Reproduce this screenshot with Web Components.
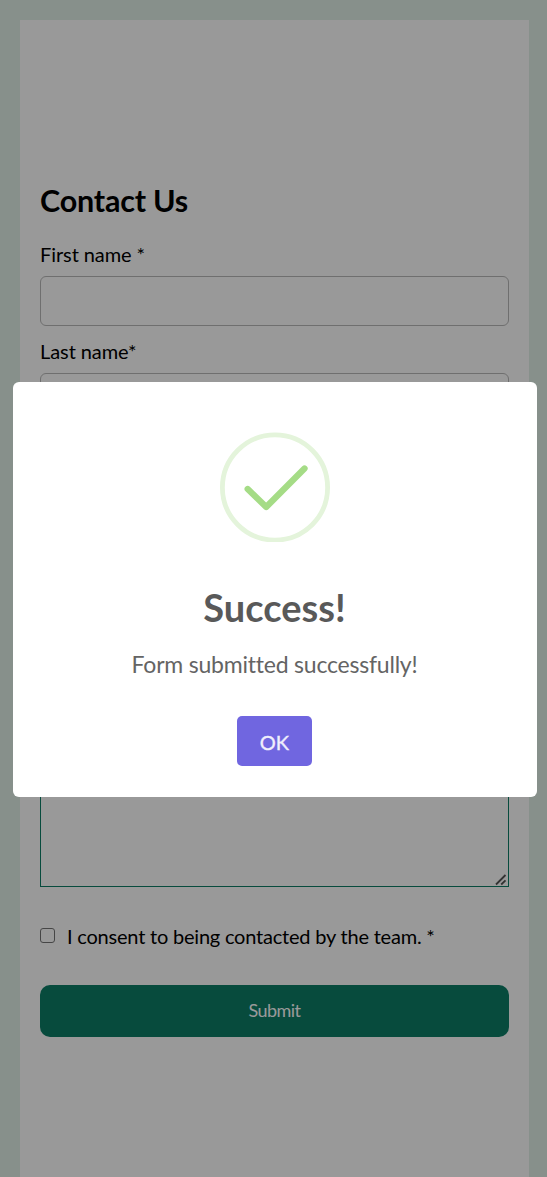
<!DOCTYPE html>
<html lang="en">
<head>
<meta charset="utf-8">
<title>Contact Us</title>
<style>
html, body { margin: 0; height: 100%; overflow: hidden; }
body { font-family: Lato, "Liberation Sans", sans-serif; font-variant-ligatures: none; color: #000; background: #e1f1e8; }
</style>
</head>
<body>
<contact-page>
  <contact-form>
    <form-field>First name *</form-field>
    <form-field>Last name*</form-field>
    <message-box></message-box>
    <consent-check>I consent to being contacted by the team. *</consent-check>
    <submit-button>Submit</submit-button>
  </contact-form>
</contact-page>
<success-dialog>
  <success-icon slot="icon"></success-icon>
  <span slot="title">Success!</span>
  <span slot="text">Form submitted successfully!</span>
  <span slot="action">OK</span>
</success-dialog>
<script>
function define(name, markup) {
  const template = document.createElement('template');
  template.innerHTML = '<style>*{box-sizing:border-box}:host{box-sizing:border-box}</style>' + markup;
  customElements.define(name, class extends HTMLElement {
    constructor() {
      super();
      this.attachShadow({ mode: 'open' }).append(template.content.cloneNode(true));
    }
  });
}

define('contact-page', `
<style>:host{display:block;height:1177px;padding:20px 18px 0 20px}</style>
<slot></slot>`);

define('contact-form', `
<style>
:host{display:flex;flex-direction:column;height:100%;background:#fff;padding:159px 20px 0}
h1{margin:0 0 20px;font-size:30.5px;line-height:42px;font-weight:700;letter-spacing:-.2px}
</style>
<h1>Contact Us</h1>
<slot></slot>`);

define('form-field', `
<style>
:host{display:block;height:97px}
label{display:block;font-size:20px;line-height:26px;height:35px;letter-spacing:-.08px}
input{display:block;width:100%;height:50px;border:1px solid #b9b9b9;border-radius:6px;background:#fff;padding:0 12px;font:inherit}
</style>
<label><slot></slot></label><input type="text">`);

define('message-box', `
<style>
:host{display:block;margin-top:230px;height:222px}
.area{height:100%;border:1px solid #0c7d67;display:flex;align-items:flex-end;justify-content:flex-end;padding:0 1px 0 0}
svg{display:block}
</style>
<div class="area"><svg width="12" height="12" viewBox="0 0 12 12" fill="none" stroke="#555" stroke-width="1.8"><path d="M1 10.5 10.5 1M6.2 10.5l4.3-4.2"/></svg></div>`);

define('consent-check', `
<style>
:host{display:flex;align-items:center;margin-top:36px;height:26px;font-size:20px;line-height:26px;letter-spacing:-.21px}
i{width:15px;height:15px;margin:0 12px 1px 0;border:1px solid #767676;border-radius:3px;background:#fff}
</style>
<i></i><span><slot></slot></span>`);

define('submit-button', `
<style>
:host{display:block;margin-top:36px}
button{display:block;width:100%;height:52px;border:0;border-radius:10px;background:#0c7d67;color:#fff;font-family:inherit;font-size:18px;letter-spacing:-.55px;padding:0 0 2px}
</style>
<button><slot></slot></button>`);

define('success-dialog', `
<style>
:host{position:fixed;inset:0;display:flex;align-items:flex-start;background:rgba(0,0,0,.4);padding:382px 10px 0 13px}
section{width:100%;height:415px;border-radius:6px;background:#fff;display:flex;flex-direction:column;align-items:center;padding:50px 1px 0 0}
h2{margin:39px 0 0;font-size:38px;line-height:52px;font-weight:700;color:#595959}
p{margin:15px 0 0;font-size:23px;line-height:32px;color:#646464;letter-spacing:-.21px}
button{margin:36px 0 0;width:75px;height:50px;border:0;border-radius:5px;background:#7066e0;color:#f0effc;font-family:inherit;font-size:20px;padding:1px 0 0;-webkit-text-stroke:.35px #f0effc}
</style>
<section role="dialog">
<slot name="icon"></slot>
<h2><slot name="title"></slot></h2>
<p><slot name="text"></slot></p>
<button><slot name="action"></slot></button>
</section>`);

define('success-icon', `
<style>:host{display:block}svg{display:block}</style>
<svg width="110" height="110" viewBox="0 0 110 110" fill="none"><circle cx="55" cy="55.5" r="52.6" stroke="#e4f4db" stroke-width="4.8"/><path d="M27.7 57 46.2 75 84.5 36.5" stroke="#a5dc86" stroke-width="6.3" stroke-linecap="round" stroke-linejoin="round"/></svg>`);
</script>
</body>
</html>
